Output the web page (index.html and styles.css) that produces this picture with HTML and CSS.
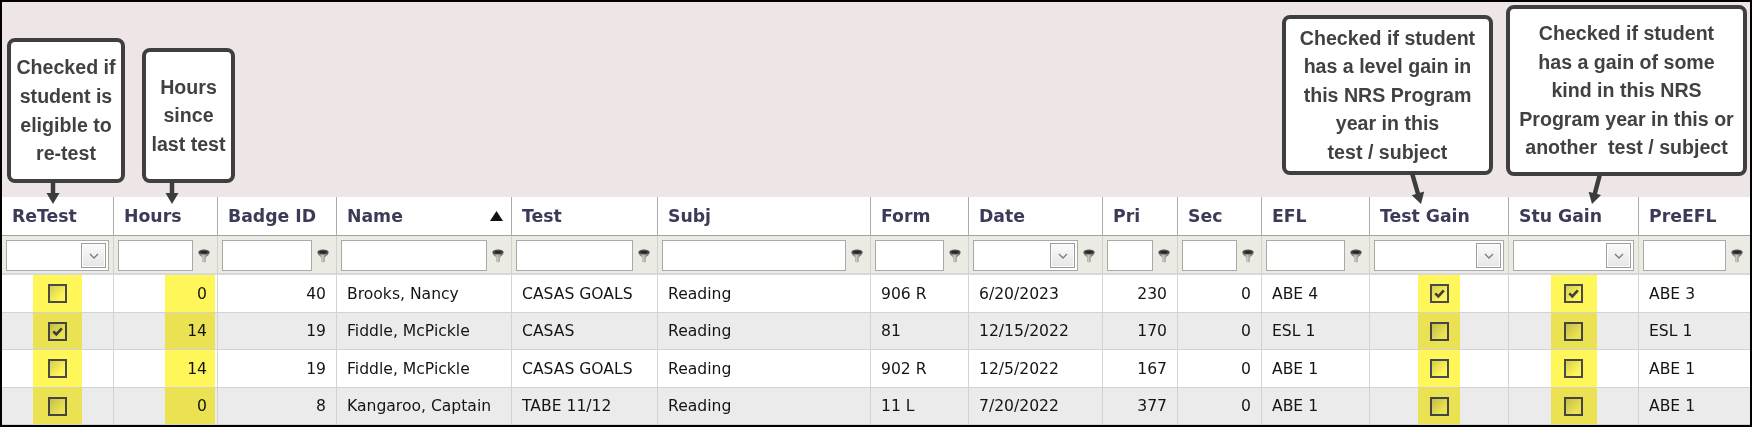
FILE: index.html
```html
<!DOCTYPE html>
<html>
<head>
<meta charset="utf-8">
<title>Tests</title>
<link rel="stylesheet" href="styles.css">
</head>
<body>
<svg class="defs" width="0" height="0" aria-hidden="true">
  <defs>
    <linearGradient id="fg" x1="0" x2="1" y1="0" y2="0">
      <stop offset="0" stop-color="#555"/>
      <stop offset=".45" stop-color="#c8c8c8"/>
      <stop offset="1" stop-color="#555"/>
    </linearGradient>
  </defs>
</svg>
<div class="frame">
  <div class="annot">
    <div class="callout c1">Checked if<br>student is<br>eligible to<br>re-test</div>
    <div class="callout c2">Hours<br>since<br>last test</div>
    <div class="callout c3">Checked if student<br>has a level gain in<br>this NRS Program<br>year in this<br>test / subject</div>
    <div class="callout c4">Checked if student<br>has a gain of some<br>kind in this NRS<br>Program year in this or<br>another&nbsp; test / subject</div>
  </div>

  <div class="grid">
    <div class="row head">
      <div class="h">ReTest</div>
      <div class="h">Hours</div>
      <div class="h">Badge ID</div>
      <div class="h h-sort">Name<svg class="sort" width="13" height="10" viewBox="0 0 13 10"><polygon points="0,10 6.5,0 13,10" fill="#111"/></svg></div>
      <div class="h">Test</div>
      <div class="h">Subj</div>
      <div class="h">Form</div>
      <div class="h">Date</div>
      <div class="h">Pri</div>
      <div class="h">Sec</div>
      <div class="h">EFL</div>
      <div class="h">Test Gain</div>
      <div class="h">Stu Gain</div>
      <div class="h">PreEFL</div>
    </div>

    <div class="row filters">
      <div class="f"><div class="dd"><div class="dd-btn"><svg width="10" height="6" viewBox="0 0 10 6"><path d="M1 1 L5 5 L9 1" fill="none" stroke="#7a7a7a" stroke-width="1.3"/></svg></div></div></div>
      <div class="f"><div class="tb"></div><svg class="fi" width="12" height="14" viewBox="0 0 12 14"><path d="M0.5 3 C0.5 6.5 4 7.3 4.2 9 L4.2 12.8 Q6 14 7.8 12.8 L7.8 9 C8 7.3 11.5 6.5 11.5 3 Z" fill="url(#fg)"/><ellipse cx="6" cy="3" rx="5.5" ry="2.4" fill="#4d4d4d"/><ellipse cx="6" cy="3.2" rx="3.6" ry="1.2" fill="#262626"/></svg></div>
      <div class="f"><div class="tb"></div><svg class="fi" width="12" height="14" viewBox="0 0 12 14"><path d="M0.5 3 C0.5 6.5 4 7.3 4.2 9 L4.2 12.8 Q6 14 7.8 12.8 L7.8 9 C8 7.3 11.5 6.5 11.5 3 Z" fill="url(#fg)"/><ellipse cx="6" cy="3" rx="5.5" ry="2.4" fill="#4d4d4d"/><ellipse cx="6" cy="3.2" rx="3.6" ry="1.2" fill="#262626"/></svg></div>
      <div class="f"><div class="tb"></div><svg class="fi" width="12" height="14" viewBox="0 0 12 14"><path d="M0.5 3 C0.5 6.5 4 7.3 4.2 9 L4.2 12.8 Q6 14 7.8 12.8 L7.8 9 C8 7.3 11.5 6.5 11.5 3 Z" fill="url(#fg)"/><ellipse cx="6" cy="3" rx="5.5" ry="2.4" fill="#4d4d4d"/><ellipse cx="6" cy="3.2" rx="3.6" ry="1.2" fill="#262626"/></svg></div>
      <div class="f"><div class="tb"></div><svg class="fi" width="12" height="14" viewBox="0 0 12 14"><path d="M0.5 3 C0.5 6.5 4 7.3 4.2 9 L4.2 12.8 Q6 14 7.8 12.8 L7.8 9 C8 7.3 11.5 6.5 11.5 3 Z" fill="url(#fg)"/><ellipse cx="6" cy="3" rx="5.5" ry="2.4" fill="#4d4d4d"/><ellipse cx="6" cy="3.2" rx="3.6" ry="1.2" fill="#262626"/></svg></div>
      <div class="f"><div class="tb"></div><svg class="fi" width="12" height="14" viewBox="0 0 12 14"><path d="M0.5 3 C0.5 6.5 4 7.3 4.2 9 L4.2 12.8 Q6 14 7.8 12.8 L7.8 9 C8 7.3 11.5 6.5 11.5 3 Z" fill="url(#fg)"/><ellipse cx="6" cy="3" rx="5.5" ry="2.4" fill="#4d4d4d"/><ellipse cx="6" cy="3.2" rx="3.6" ry="1.2" fill="#262626"/></svg></div>
      <div class="f"><div class="tb"></div><svg class="fi" width="12" height="14" viewBox="0 0 12 14"><path d="M0.5 3 C0.5 6.5 4 7.3 4.2 9 L4.2 12.8 Q6 14 7.8 12.8 L7.8 9 C8 7.3 11.5 6.5 11.5 3 Z" fill="url(#fg)"/><ellipse cx="6" cy="3" rx="5.5" ry="2.4" fill="#4d4d4d"/><ellipse cx="6" cy="3.2" rx="3.6" ry="1.2" fill="#262626"/></svg></div>
      <div class="f"><div class="dd"><div class="dd-btn"><svg width="10" height="6" viewBox="0 0 10 6"><path d="M1 1 L5 5 L9 1" fill="none" stroke="#7a7a7a" stroke-width="1.3"/></svg></div></div><svg class="fi" width="12" height="14" viewBox="0 0 12 14"><path d="M0.5 3 C0.5 6.5 4 7.3 4.2 9 L4.2 12.8 Q6 14 7.8 12.8 L7.8 9 C8 7.3 11.5 6.5 11.5 3 Z" fill="url(#fg)"/><ellipse cx="6" cy="3" rx="5.5" ry="2.4" fill="#4d4d4d"/><ellipse cx="6" cy="3.2" rx="3.6" ry="1.2" fill="#262626"/></svg></div>
      <div class="f"><div class="tb"></div><svg class="fi" width="12" height="14" viewBox="0 0 12 14"><path d="M0.5 3 C0.5 6.5 4 7.3 4.2 9 L4.2 12.8 Q6 14 7.8 12.8 L7.8 9 C8 7.3 11.5 6.5 11.5 3 Z" fill="url(#fg)"/><ellipse cx="6" cy="3" rx="5.5" ry="2.4" fill="#4d4d4d"/><ellipse cx="6" cy="3.2" rx="3.6" ry="1.2" fill="#262626"/></svg></div>
      <div class="f"><div class="tb"></div><svg class="fi" width="12" height="14" viewBox="0 0 12 14"><path d="M0.5 3 C0.5 6.5 4 7.3 4.2 9 L4.2 12.8 Q6 14 7.8 12.8 L7.8 9 C8 7.3 11.5 6.5 11.5 3 Z" fill="url(#fg)"/><ellipse cx="6" cy="3" rx="5.5" ry="2.4" fill="#4d4d4d"/><ellipse cx="6" cy="3.2" rx="3.6" ry="1.2" fill="#262626"/></svg></div>
      <div class="f"><div class="tb"></div><svg class="fi" width="12" height="14" viewBox="0 0 12 14"><path d="M0.5 3 C0.5 6.5 4 7.3 4.2 9 L4.2 12.8 Q6 14 7.8 12.8 L7.8 9 C8 7.3 11.5 6.5 11.5 3 Z" fill="url(#fg)"/><ellipse cx="6" cy="3" rx="5.5" ry="2.4" fill="#4d4d4d"/><ellipse cx="6" cy="3.2" rx="3.6" ry="1.2" fill="#262626"/></svg></div>
      <div class="f"><div class="dd"><div class="dd-btn"><svg width="10" height="6" viewBox="0 0 10 6"><path d="M1 1 L5 5 L9 1" fill="none" stroke="#7a7a7a" stroke-width="1.3"/></svg></div></div></div>
      <div class="f"><div class="dd"><div class="dd-btn"><svg width="10" height="6" viewBox="0 0 10 6"><path d="M1 1 L5 5 L9 1" fill="none" stroke="#7a7a7a" stroke-width="1.3"/></svg></div></div></div>
      <div class="f"><div class="tb"></div><svg class="fi" width="12" height="14" viewBox="0 0 12 14"><path d="M0.5 3 C0.5 6.5 4 7.3 4.2 9 L4.2 12.8 Q6 14 7.8 12.8 L7.8 9 C8 7.3 11.5 6.5 11.5 3 Z" fill="url(#fg)"/><ellipse cx="6" cy="3" rx="5.5" ry="2.4" fill="#4d4d4d"/><ellipse cx="6" cy="3.2" rx="3.6" ry="1.2" fill="#262626"/></svg></div>
    </div>

    <div class="body">
      <div class="row r">
        <div class="c c-hl"><span class="hl w49"><span class="cb"></span></span></div>
        <div class="c c-hours"><span class="hl num">0</span></div>
        <div class="c num-c">40</div>
        <div class="c">Brooks, Nancy</div>
        <div class="c">CASAS GOALS</div>
        <div class="c">Reading</div>
        <div class="c">906 R</div>
        <div class="c">6/20/2023</div>
        <div class="c num-c">230</div>
        <div class="c num-c">0</div>
        <div class="c">ABE 4</div>
        <div class="c c-hl"><span class="hl w42"><span class="cb on"><svg width="15" height="15" viewBox="0 0 15 15"><path d="M3.3 7.3 L6.3 10.3 L11.8 4.3" fill="none" stroke="#3e3e3e" stroke-width="2.6"/></svg></span></span></div>
        <div class="c c-hl"><span class="hl w46"><span class="cb on"><svg width="15" height="15" viewBox="0 0 15 15"><path d="M3.3 7.3 L6.3 10.3 L11.8 4.3" fill="none" stroke="#3e3e3e" stroke-width="2.6"/></svg></span></span></div>
        <div class="c">ABE 3</div>
      </div>
      <div class="row r">
        <div class="c c-hl"><span class="hl w49"><span class="cb on"><svg width="15" height="15" viewBox="0 0 15 15"><path d="M3.3 7.3 L6.3 10.3 L11.8 4.3" fill="none" stroke="#3e3e3e" stroke-width="2.6"/></svg></span></span></div>
        <div class="c c-hours"><span class="hl num">14</span></div>
        <div class="c num-c">19</div>
        <div class="c">Fiddle, McPickle</div>
        <div class="c">CASAS</div>
        <div class="c">Reading</div>
        <div class="c">81</div>
        <div class="c">12/15/2022</div>
        <div class="c num-c">170</div>
        <div class="c num-c">0</div>
        <div class="c">ESL 1</div>
        <div class="c c-hl"><span class="hl w42"><span class="cb"></span></span></div>
        <div class="c c-hl"><span class="hl w46"><span class="cb"></span></span></div>
        <div class="c">ESL 1</div>
      </div>
      <div class="row r">
        <div class="c c-hl"><span class="hl w49"><span class="cb"></span></span></div>
        <div class="c c-hours"><span class="hl num">14</span></div>
        <div class="c num-c">19</div>
        <div class="c">Fiddle, McPickle</div>
        <div class="c">CASAS GOALS</div>
        <div class="c">Reading</div>
        <div class="c">902 R</div>
        <div class="c">12/5/2022</div>
        <div class="c num-c">167</div>
        <div class="c num-c">0</div>
        <div class="c">ABE 1</div>
        <div class="c c-hl"><span class="hl w42"><span class="cb"></span></span></div>
        <div class="c c-hl"><span class="hl w46"><span class="cb"></span></span></div>
        <div class="c">ABE 1</div>
      </div>
      <div class="row r">
        <div class="c c-hl"><span class="hl w49"><span class="cb"></span></span></div>
        <div class="c c-hours"><span class="hl num">0</span></div>
        <div class="c num-c">8</div>
        <div class="c">Kangaroo, Captain</div>
        <div class="c">TABE 11/12</div>
        <div class="c">Reading</div>
        <div class="c">11 L</div>
        <div class="c">7/20/2022</div>
        <div class="c num-c">377</div>
        <div class="c num-c">0</div>
        <div class="c">ABE 1</div>
        <div class="c c-hl"><span class="hl w42"><span class="cb"></span></span></div>
        <div class="c c-hl"><span class="hl w46"><span class="cb"></span></span></div>
        <div class="c">ABE 1</div>
      </div>
    </div>
  </div>

  <svg class="arrows" width="1748" height="423" viewBox="0 0 1748 423" aria-hidden="true">
    <g stroke="#3c3c3c" stroke-width="4.5" fill="none">
      <line x1="51" y1="179" x2="51" y2="193"/>
      <line x1="170" y1="179" x2="170" y2="193"/>
      <line x1="1410" y1="171" x2="1416.2" y2="192.5"/>
      <line x1="1598" y1="172" x2="1592.6" y2="192.5"/>
    </g>
    <g fill="#3c3c3c">
      <polygon points="44.5,191 57.5,191 51,202"/>
      <polygon points="163.5,191 176.5,191 170,202"/>
      <polygon points="1409.7,193.3 1422.2,189.6 1419,202"/>
      <polygon points="1599.1,193.1 1586.6,189.7 1590,202"/>
    </g>
  </svg>
</div>
</body>
</html>
```

FILE: styles.css
```css
* { box-sizing: border-box; }

html, body {
  margin: 0;
  padding: 0;
  background: #fff;
}

.defs {
  display: block;
  width: 0;
  height: 0;
  overflow: hidden;
}

.frame {
  position: relative;
  width: 1752px;
  height: 427px;
  border: 2px solid #000;
  background: #eee6e6;
  display: flex;
  flex-direction: column;
  overflow: hidden;
  font-family: "DejaVu Sans", Verdana, sans-serif;
}

/* ---------- annotation area ---------- */
.annot {
  position: relative;
  height: 195px;
  flex: none;
}

.callout {
  position: absolute;
  background: #fff;
  border: 4px solid #3f3f3f;
  border-radius: 8px;
  display: flex;
  align-items: center;
  justify-content: center;
  text-align: center;
  white-space: nowrap;
  font-family: "Liberation Sans", Arial, sans-serif;
  font-weight: bold;
  font-size: 19.6px;
  line-height: 28.6px;
  color: #414141;
}

.c1 { left: 5px;    top: 36px; width: 118px; height: 145px; }
.c2 { left: 140px;  top: 46px; width: 93px;  height: 135px; }
.c3 { left: 1280px; top: 13px; width: 211px; height: 160px; }
.c4 { left: 1504px; top: 3px;  width: 241px; height: 171px; }

.arrows {
  position: absolute;
  left: 0;
  top: 0;
  z-index: 3;
  pointer-events: none;
}

/* ---------- grid ---------- */
.grid {
  flex: 1;
  background: #fff;
  display: flex;
  flex-direction: column;
}

.row {
  display: grid;
  grid-template-columns: 112px 104px 119px 175px 146px 213px 98px 134px 75px 84px 108px 139px 130px 111px;
}

/* header */
.head {
  height: 39px;
  background: #fff;
}

.h {
  display: flex;
  align-items: center;
  padding: 0 10px;
  border-right: 1px solid #ababab;
  border-bottom: 1px solid #a2a2a2;
  font-weight: bold;
  font-size: 17.3px;
  color: #3b3a57;
  white-space: nowrap;
}

.h:last-child { border-right: none; }

.h-sort { padding-right: 8px; }

.sort { margin-left: auto; margin-top: -1px; }

/* filters */
.filters {
  height: 39px;
  background: #ecebe3;
}

.f {
  display: flex;
  align-items: center;
  padding: 0 4px;
  border-right: 1px solid #d2d2cc;
  border-bottom: 2px solid #d8d8d8;
}

.f:last-child { border-right: none; }

.tb {
  flex: 1;
  min-width: 0;
  height: 31px;
  margin-top: 2px;
  background: #fff;
  border: 1px solid #a9a9a9;
}

.fi {
  flex: none;
  margin: 2px 3px 0 5px;
}

.dd {
  flex: 1;
  min-width: 0;
  height: 31px;
  margin-top: 2px;
  background: #fff;
  border: 1px solid #a9a9a9;
  display: flex;
  justify-content: flex-end;
  padding: 2px;
}

.dd-btn {
  width: 25px;
  height: 100%;
  border: 1px solid #9c9c9c;
  box-shadow: inset 0 0 0 1px #fdfdfd;
  background: linear-gradient(#fafafa, #e6e6e6);
  display: flex;
  align-items: center;
  justify-content: center;
}

/* body */
.body {
  flex: 1;
  display: grid;
  grid-template-rows: 38px 37px 38px 37px;
}

.r { background: #fff; }
.r:nth-child(even) { background: #ebebeb; }

.c {
  display: flex;
  align-items: center;
  padding: 0 10px;
  border-right: 1px solid #d3d3d3;
  border-bottom: 1px solid #d3d3d3;
  font-size: 15.6px;
  color: #141414;
  white-space: nowrap;
}

.c:last-child { border-right: none; }

.num-c { justify-content: flex-end; }

.c-hl {
  padding: 0;
  justify-content: center;
  align-items: stretch;
}

.c-hours {
  padding: 0 2px 0 0;
  justify-content: flex-end;
  align-items: stretch;
}

.hl {
  display: flex;
  align-items: center;
  justify-content: center;
  background: #fff65a;
  mix-blend-mode: multiply;
}

.hl.num {
  width: 50px;
  justify-content: flex-end;
  padding-right: 8px;
}

.w49 { width: 49px; }
.w42 { width: 42px; }
.w46 { width: 46px; }

.cb {
  width: 19px;
  height: 19px;
  border: 2px solid #4a4a4a;
  background: linear-gradient(135deg, rgba(0,0,0,0.16), rgba(0,0,0,0) 75%);
  display: flex;
  align-items: center;
  justify-content: center;
}

.cb svg { display: block; }
```
